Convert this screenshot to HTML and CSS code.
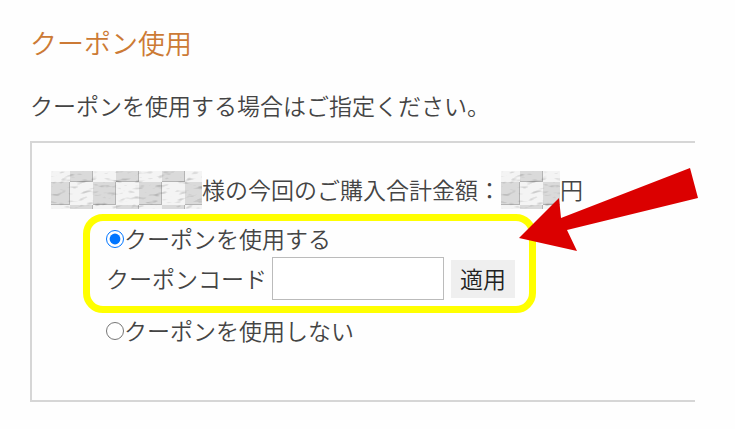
FILE: index.html
```html
<!DOCTYPE html>
<html lang="ja">
<head>
  <meta charset="UTF-8">
  <meta name="viewport" content="width=device-width, initial-scale=1">
  <title>クーポン使用</title>
  <link rel="stylesheet" href="styles.css">
</head>
<body>

<main class="coupon">
  <h1 class="title">クーポン使用</h1>
  <p class="lead">クーポンを使用する場合はご指定ください。</p>

  <form class="box">
    <div class="total">
      <svg class="mosaic mosaic-name" aria-hidden="true">
        <defs>
          <filter id="paper" x="0" y="0" width="100%" height="100%" color-interpolation-filters="sRGB">
            <feTurbulence type="fractalNoise" baseFrequency="0.09 0.18" numOctaves="2" seed="4" result="noise"/>
            <feDiffuseLighting in="noise" surfaceScale="1" diffuseConstant="1.22" lighting-color="#fff" result="light">
              <feDistantLight azimuth="235" elevation="58"/>
            </feDiffuseLighting>
            <feBlend in="SourceGraphic" in2="light" mode="multiply"/>
          </filter>
          <pattern id="tiles" x="-4" y="-11" width="46" height="45" patternUnits="userSpaceOnUse">
            <rect width="46" height="45" fill="#f4f4f4"/>
            <rect x="23" width="23" height="22" fill="#dadada"/>
            <rect y="22" width="23" height="23" fill="#dadada"/>
            <path d="M23 21.5h23M0 44.5h23M22.5 22v23M45.5 0v22" stroke="#b4b4b4" fill="none"/>
          </pattern>
        </defs>
        <rect width="100%" height="100%" fill="url(#tiles)" filter="url(#paper)"/>
      </svg>
      <span>様の今回のご購入合計金額：</span>
      <svg class="mosaic mosaic-price" aria-hidden="true">
        <rect width="100%" height="100%" fill="url(#tiles)" filter="url(#paper)"/>
      </svg>
      <span>円</span>
    </div>

    <div class="highlight">
      <div class="row">
        <input type="radio" name="coupon" id="use" checked>
        <label for="use">クーポンを使用する</label>
      </div>
      <div class="code">
        <label for="code">クーポンコード</label>
        <input type="text" id="code">
        <button type="button">適用</button>
      </div>
      <svg class="arrow" viewBox="0 0 180 84" aria-hidden="true">
        <path d="M0 70L40 30L42 50L171 0L179 30L48 62L58 83Z" fill="#db0000"/>
      </svg>
    </div>

    <div class="row row-none">
      <input type="radio" name="coupon" id="none">
      <label for="none">クーポンを使用しない</label>
    </div>
  </form>
</main>

</body>
</html>
```
FILE: styles.css
```css
* {
  box-sizing: border-box;
}

body {
  margin: 0;
  background: #fefefe;
  color: #444;
  font-family: "Noto Sans CJK JP", sans-serif;
  font-size: 23px;
  font-weight: 350;
  line-height: 36px;
}

.coupon {
  padding: 23px 40px 24px 30px;
}

.title {
  margin: 0;
  color: #cc7a35;
  font-size: 27px;
  font-weight: 350;
  line-height: 40px;
}

.lead {
  margin: 24px 0 18px;
}

.box {
  padding: 28px 0 51px 19px;
  border: 2px solid #d6d6d6;
  border-right: none;
}

.total {
  display: flex;
  align-items: center;
}

.total span,
.row label,
.code label {
  padding-bottom: 2px;
  line-height: 34px;
}

.mosaic {
  flex: none;
  height: 38px;
}

.mosaic-name { width: 151px; }
.mosaic-price { width: 59px; }

.highlight {
  position: relative;
  width: fit-content;
  margin: 5px 0 0 32px;
  padding: 0 14px 6px 16px;
  border: 7px solid #ff0;
  border-radius: 20px;
}

.row {
  display: flex;
  align-items: center;
}

.row-none {
  margin-left: 55px;
}

input[type="radio"] {
  width: 18px;
  height: 18px;
  margin: 0;
  accent-color: #0075ff;
}

.code {
  display: flex;
  align-items: center;
}

.code input {
  width: 172px;
  height: 43px;
  margin: 0 7px 0 5px;
  padding: 0 8px;
  border: 1px solid #bbb;
  background: #fff;
  color: inherit;
  font: inherit;
}

.code button {
  padding: 0 9px 2px;
  border: none;
  background: #efefef;
  color: #222;
  font: inherit;
}

/* points at the highlighted area */
.arrow {
  position: absolute;
  top: -53px;
  left: 429px;
  width: 180px;
  height: 84px;
}
```
